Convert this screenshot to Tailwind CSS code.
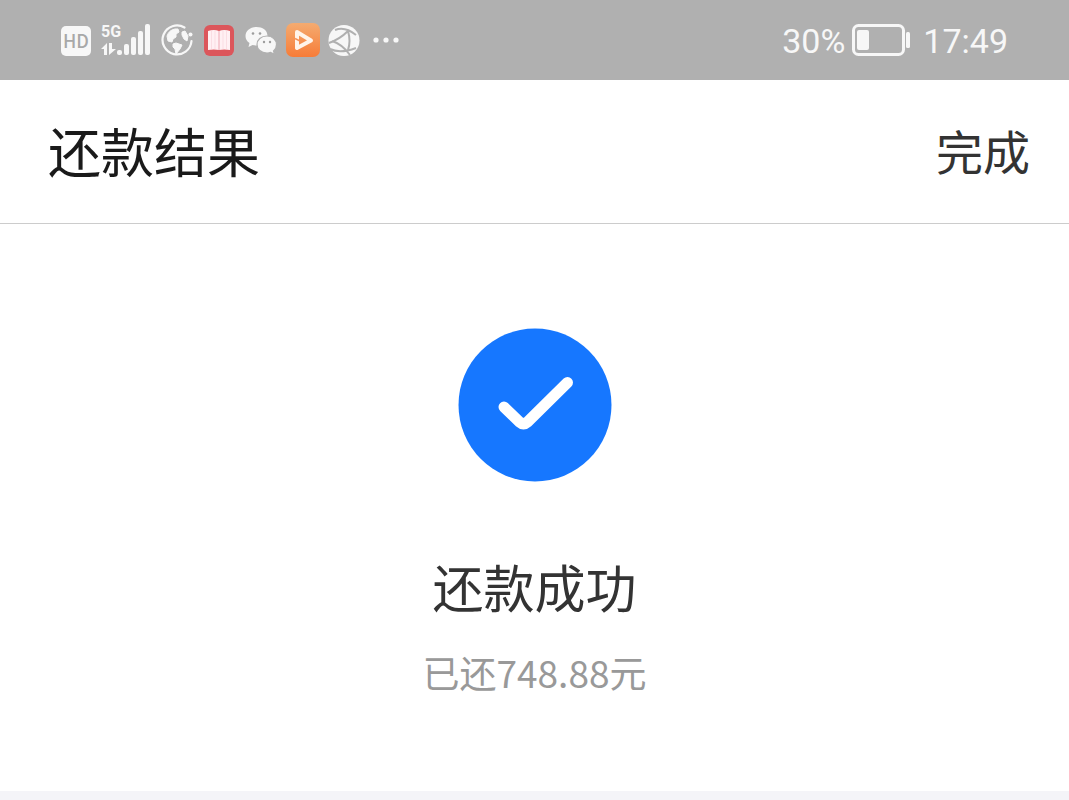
<!DOCTYPE html>
<html lang="zh-CN">
<head>
  <meta charset="UTF-8" />
  <meta name="viewport" content="width=device-width, initial-scale=1.0"/>
  <title>还款结果</title>
  <script src="https://cdn.jsdelivr.net/npm/@tailwindcss/browser@4"></script>
</head>
<body class="min-h-screen flex flex-col bg-[#f4f4f8] font-['Noto_Sans_CJK_SC',sans-serif]">
  <!-- Status bar -->
  <div class="h-20 shrink-0 bg-[#b0b0b0] pl-[60px] pr-[61px] flex items-center justify-between text-[#f7f7f7]">
    <div class="flex items-center gap-2">
      <svg class="w-8 h-[34px]" viewBox="0 0 32 34" role="img" aria-label="HD">
        <rect x="1" y="3" width="30" height="30" rx="5" fill="#f7f7f7"/>
        <text x="16" y="25" text-anchor="middle" font-family="Noto Sans CJK SC, sans-serif" font-size="18" font-weight="500" fill="#a8a8a8">HD</text>
      </svg>
      <svg class="w-[52px] h-[34px]" viewBox="0 0 52 34" fill="#f7f7f7" role="img" aria-label="5G">
        <text x="1" y="14" font-family="Roboto, sans-serif" font-size="16" font-weight="700">5G</text>
        <path d="M1 26l6-6v12H4v-6zM9 20h3v6h4l-7 6z"/>
        <rect x="17" y="27" width="5" height="5" rx="2"/>
        <rect x="24" y="21" width="5" height="11" rx="2"/>
        <rect x="31" y="14" width="5" height="18" rx="2"/>
        <rect x="38" y="8" width="5" height="24" rx="2"/>
        <rect x="45" y="1" width="5" height="31" rx="2"/>
      </svg>
      <svg class="w-[34px] h-[34px]" viewBox="0 0 34 34" fill="none">
        <path d="M24.500 4.500A14.500 14.500 0 1 0 31.500 18" stroke="#f7f7f7" stroke-width="2.200" stroke-linecap="round"/>
        <circle cx="30.500" cy="11.500" r="2" fill="#f7f7f7"/>
        <path d="M15 6q-6 1-8 7l1 5 4 1 1-3 3-2 0-3 3-2-1-3zM13 21l3-1 6 2-2 4-4 5-1-5-2-2zM22 9l3-1 3 5-1 5-3-2-2-4z" fill="#f7f7f7" stroke="#f7f7f7" stroke-width="1" stroke-linejoin="round"/>
      </svg>
      <svg class="w-[34px] h-[34px]" viewBox="0 0 34 34">
        <rect x="2" y="2" width="30" height="31" rx="6" fill="#dc565b"/>
        <path d="M6 8q6-2 11 0 5-2 11 0v19q-6-1-11 0-5-1-11 0z" fill="#fff0f3"/>
        <path d="M17 8v19" stroke="#f0b4be" stroke-width="1.200"/>
        <path d="M9.500 8v18M13 8v18M21 8v18M24.500 8v18" stroke="#fadde3" stroke-width="1"/>
      </svg>
      <svg class="w-[34px] h-[34px]" viewBox="0 0 34 34">
        <path d="M12.500 4C6 4 1.500 8 1.500 13c0 3 1.500 5.500 4 7l-1 4 4-2c9 2 15-3 15-9S18.500 4 12.500 4z" fill="#f7f7f7"/>
        <path d="M23 13c-6 0-10 3.800-10 8.500S17 30 23 30c1 0 2.500-.2 3.500-.6l4 1.800-1-3.200c2-1.500 3-3.800 3-6.500 0-4.700-4-8.500-9.500-8.500z" fill="#f7f7f7" stroke="#b0b0b0" stroke-width="1.200"/>
        <g fill="#9d9d9d"><circle cx="9" cy="10.500" r="1.300"/><circle cx="16" cy="10.500" r="1.300"/><circle cx="20" cy="19" r="1.200"/><circle cx="26" cy="19" r="1.200"/></g>
      </svg>
      <svg class="w-[34px] h-[34px]" viewBox="0 0 34 34">
        <defs>
          <linearGradient id="orange" x1="0" y1="0" x2="0" y2="1">
            <stop offset="0" stop-color="#f4ab70"/>
            <stop offset="1" stop-color="#f77c38"/>
          </linearGradient>
        </defs>
        <rect width="34" height="34" rx="7" fill="url(#orange)"/>
        <path d="M11 25V9l14 8.500z" fill="none" stroke="#fff4ea" stroke-width="4" stroke-linejoin="round"/>
        <path d="M9 15.500l5 2.500" stroke="#f6935a" stroke-width="1.500"/>
      </svg>
      <svg class="w-8 h-[34px]" viewBox="0 0 32 34">
        <circle cx="16" cy="17.500" r="15.500" fill="#f7f7f7"/>
        <path d="M1 20Q12 16 20 8M4 18Q14 21 22 32M20 8Q23 18 20 27M7 7Q17 3 28 12M2 26Q12 31 28 25" fill="none" stroke="#b0b0b0" stroke-width="2"/>
      </svg>
      <svg class="w-9 h-[34px]" viewBox="0 0 36 34" fill="#f7f7f7">
        <circle cx="8" cy="17" r="2.600"/><circle cx="18" cy="17" r="2.600"/><circle cx="28" cy="17" r="2.600"/>
      </svg>
    </div>
    <div class="flex items-center pt-0.5 font-[Roboto,sans-serif] text-[34px] leading-10">
      <span>30%</span>
      <svg class="w-[60px] h-[34px] ml-1.5 mr-3" viewBox="0 0 60 34">
        <rect x="2.500" y="1.500" width="50" height="29" rx="5" fill="none" stroke="#f7f7f7" stroke-width="3"/>
        <rect x="6" y="6" width="12" height="20" rx="2" fill="#f7f7f7"/>
        <rect x="55" y="8" width="4" height="16" rx="1.500" fill="#f7f7f7"/>
      </svg>
      <span>17:49</span>
    </div>
  </div>

  <header class="h-36 shrink-0 bg-white border-b border-[#cccccc] pl-12 pr-[39px] pb-1 flex items-center justify-between">
    <h1 class="text-[53px] leading-16 text-[#1a1a1a]">还款结果</h1>
    <button type="button" class="text-[47px] leading-16 text-[#333333]">完成</button>
  </header>

  <!-- Result -->
  <main class="bg-white pt-26 pb-[93px] flex flex-col items-center text-center">
    <svg class="w-[154px] h-[154px]" viewBox="0 0 154 154" fill="none">
      <circle cx="77" cy="77" r="76.500" fill="#1677ff"/>
      <path d="M46 79l15.500 15q4 3.500 8 0L109.500 54.500" stroke="#ffffff" stroke-width="11" stroke-linecap="round" stroke-linejoin="round"/>
    </svg>
    <h2 class="mt-18 text-[51px] leading-16 text-[#333333]">还款成功</h2>
    <p class="mt-7 text-[37px] leading-13 text-[#999999]">已还748.88元</p>
  </main>
</body>
</html>
